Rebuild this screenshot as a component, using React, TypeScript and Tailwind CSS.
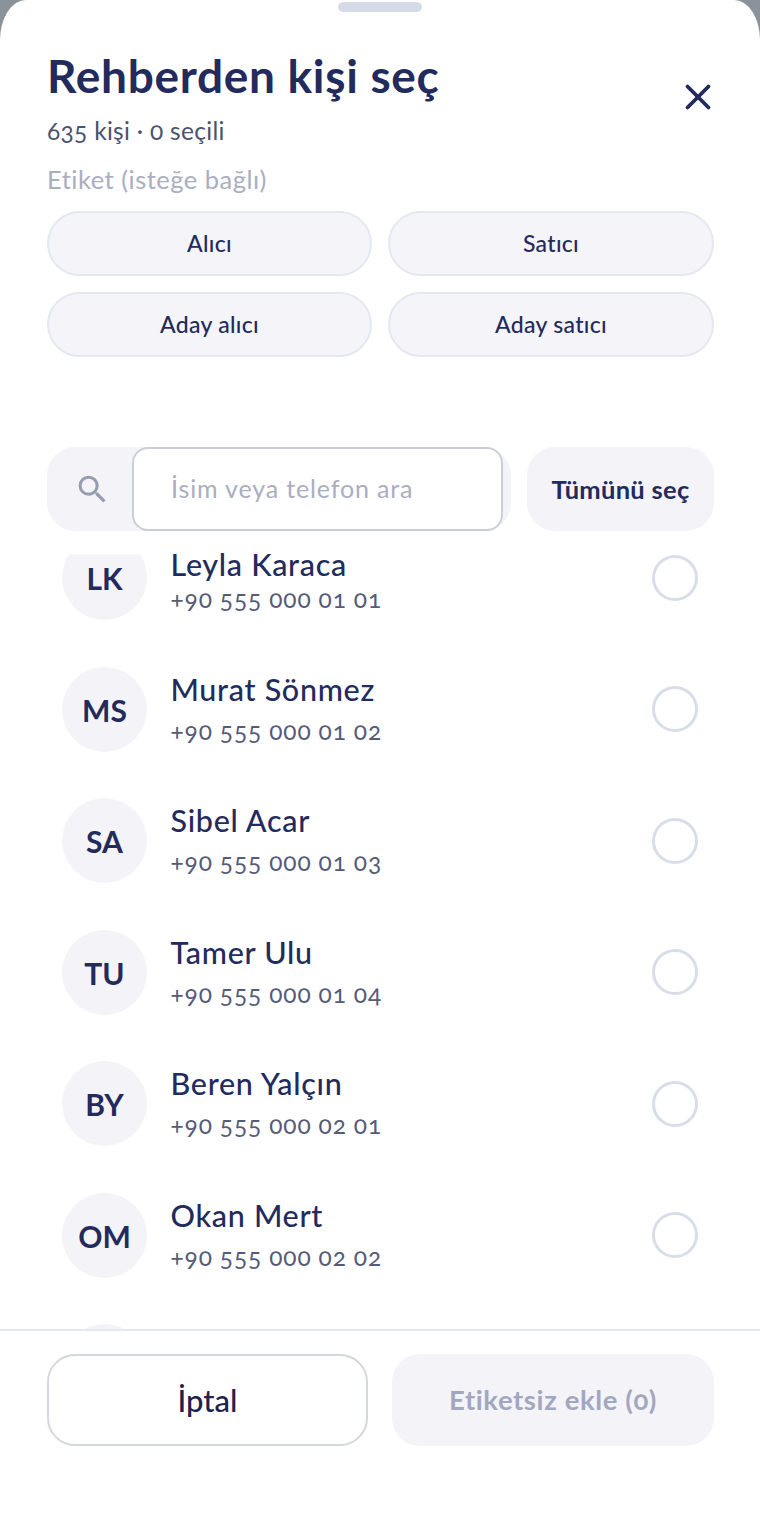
import { X } from "lucide-react";
import { MdSearch } from "react-icons/md";

type Contact = {
  initials: string;
  name: string;
  phone: string;
};

const contacts: Contact[] = [
  { initials: "LK", name: "Leyla Karaca", phone: "+90 555 000 01 01" },
  { initials: "MS", name: "Murat Sönmez", phone: "+90 555 000 01 02" },
  { initials: "SA", name: "Sibel Acar", phone: "+90 555 000 01 03" },
  { initials: "TU", name: "Tamer Ulu", phone: "+90 555 000 01 04" },
  { initials: "BY", name: "Beren Yalçın", phone: "+90 555 000 02 01" },
  { initials: "OM", name: "Okan Mert", phone: "+90 555 000 02 02" },
  { initials: "", name: "", phone: "" },
];

const tags = ["Alıcı", "Satıcı", "Aday alıcı", "Aday satıcı"];

const ContactRow = ({ contact, first }: { contact: Contact; first: boolean }) => {
  return (
    <div className="h-[131.5px] shrink-0 flex items-center pl-[62px] pr-[62px]">
      {/* first row is scrolled under the search bar */}
      <div
        className={`w-[85px] h-[85px] pt-[2px] rounded-full bg-[#f4f4f8] flex items-center justify-center text-[30px] font-bold text-[#232b5c] ${
          first ? "[clip-path:inset(19px_0_0_0)]" : ""
        }`}
      >
        {contact.initials}
      </div>
      <div className={`ml-[23.5px] flex-1 flex flex-col ${first ? "gap-[5px] mt-[6px]" : "gap-[12px] -mt-[1px]"}`}>
        <div className="text-[30.5px] leading-[32px] font-medium tracking-[0.7px] text-[#232b5c]">{contact.name}</div>
        <div className="text-[24.5px] leading-[28px] tracking-[0.85px] text-[#555b79] oldstyle-nums">{contact.phone}</div>
      </div>
      <div className="w-[46px] h-[46px] rounded-full border-[3px] border-[#d8dde9]" />
    </div>
  );
};

export default function App() {
  return (
    <div className="h-[1524px] bg-[#8a929a] overflow-hidden font-['Lato','Liberation_Sans',sans-serif]">
      <div className="h-full bg-white rounded-t-[26px_40px] flex flex-col overflow-hidden">
        <div className="h-[10px] mt-[2px] w-[84px] mx-auto rounded-full bg-[#d6dbe7] shrink-0" />

        <div className="shrink-0 pl-[47px] pr-[46px] pt-[38px] relative">
          <h1 className="text-[46px] leading-[52px] font-bold tracking-[0.7px] text-[#232b5c]">Rehberden kişi seç</h1>
          <button className="absolute right-[41px] top-[64px] text-[#232b5c]">
            <X size={42} strokeWidth={2.2} />
          </button>
          <p className="mt-[14px] text-[24.5px] leading-[30px] tracking-[0.3px] text-[#4b5272] oldstyle-nums">635 kişi · 0 seçili</p>
          <p className="mt-[18px] text-[25.5px] leading-[30px] tracking-[0.5px] text-[#a9aec1]">Etiket (isteğe bağlı)</p>
          <div className="mt-[17px] grid grid-cols-[325px_326px] gap-x-[16px] gap-y-[16px]">
            {tags.map((tag) => (
              <button
                key={tag}
                className="h-[65px] rounded-full bg-[#f4f4f9] border-2 border-[#e6e8f1] text-[23px] font-medium tracking-[0.3px] text-[#232b5c]"
              >
                {tag}
              </button>
            ))}
          </div>
        </div>

        <div className="shrink-0 mt-[90px] pl-[47px] pr-[46px] flex gap-[16px]">
          <div className="w-[464px] h-[84px] rounded-[28px] bg-[#f4f4f8] flex items-center">
            <MdSearch size={37} className="ml-[27px] text-[#979cb3]" />
            <div className="ml-[21px] w-[371px] h-[84px] rounded-[16px] bg-white border-2 border-[#cbced7] flex items-center pl-[37px] text-[25px] tracking-[0.85px] text-[#a9aec1]">
              İsim veya telefon ara
            </div>
          </div>
          <button className="flex-1 h-[84px] rounded-[28px] bg-[#f4f4f8] text-[25.5px] font-bold tracking-[0.3px] text-[#232b5c]">
            Tümünü seç
          </button>
        </div>

        <div className="flex-1 min-h-0 mt-[15px] overflow-hidden">
          <div className="-mt-[34px] flex flex-col">
            {contacts.map((contact, i) => (
              <ContactRow key={i} contact={contact} first={i === 0} />
            ))}
          </div>
        </div>

        <div className="shrink-0 h-[195px] border-t-2 border-[#e6e8f1] bg-white pl-[47px] pr-[46px] pt-[23px] flex gap-[24px]">
          <button className="w-[321px] h-[92px] rounded-[28px] bg-white border-2 border-[#d5d7de] text-[31px] font-medium text-[#1c2350]">
            İptal
          </button>
          <button className="flex-1 h-[92px] rounded-[28px] bg-[#f4f4f8] text-[27.5px] font-bold tracking-[0.6px] text-[#a2a7c0] oldstyle-nums">
            Etiketsiz ekle (0)
          </button>
        </div>
      </div>
    </div>
  );
}
